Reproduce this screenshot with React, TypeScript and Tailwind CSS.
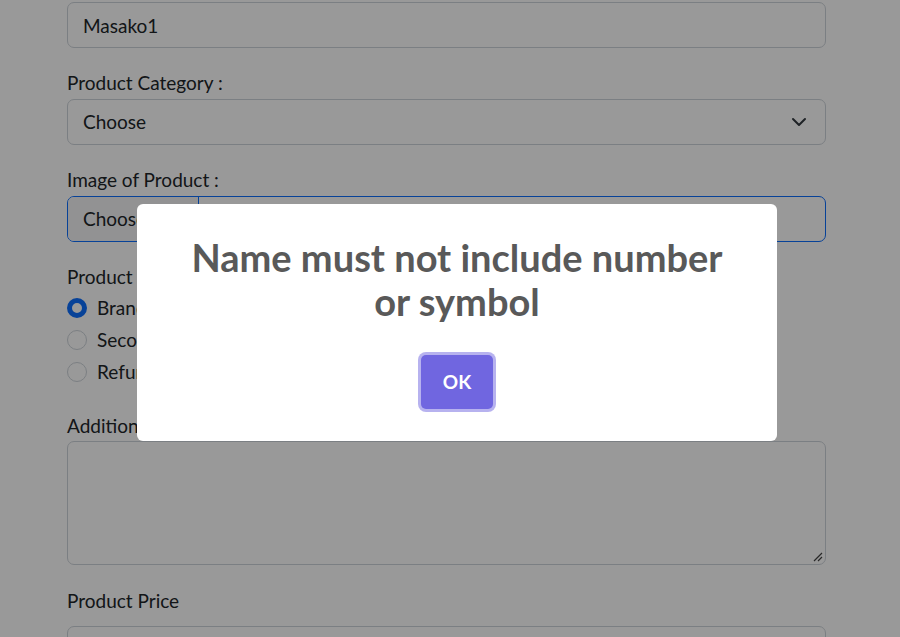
import React from "react";

const font = { fontFamily: "Lato, 'Noto Sans', sans-serif" };

const conditions = ["Brand New", "Second Hand", "Refurbished"];

const App = () => {
  return (
    <div className="relative h-[637px] w-[900px] overflow-hidden bg-white" style={font}>
      {/* form under the alert */}
      <form className="ml-[67px] flex w-[759px] flex-col pt-[2px] text-[19px] text-[#212529]">
        <input
          className="h-[46px] rounded-[7px] border border-[#ced4da] px-[15px] text-[19px] outline-none"
          defaultValue="Masako1"
        />

        <label className="mt-[21px] mb-[3px] leading-[27px]">Product Category :</label>
        <div className="flex h-[46px] items-center justify-between rounded-[7px] border border-[#ced4da] px-[15px]">
          <span>Choose</span>
          <svg width="16" height="16" viewBox="0 0 16 16" fill="none" stroke="#343a40" strokeWidth="2" strokeLinecap="round" strokeLinejoin="round" className="mr-[3px]">
            <path d="M2 5l6 6 6-6" />
          </svg>
        </div>

        <label className="mt-[21px] mb-[3px] leading-[27px]">Image of Product :</label>
        <div className="flex h-[46px] overflow-hidden rounded-[7px] border border-[#0d6efd]">
          <div className="flex w-[131px] items-center border-r border-[#0d6efd] bg-[#f3f4f5] px-[15px]">
            Choose File
          </div>
          <div className="flex items-center px-[12px]">No file chosen</div>
        </div>

        <label className="mt-[21px] mb-[6px] leading-[27px]">Product Condition :</label>
        <div className="flex flex-col gap-[8px]">
          {conditions.map((c, i) => (
            <div key={c} className="flex h-[24px] items-center gap-[10px]">
              {i === 0 ? (
                <span className="h-[20px] w-[20px] rounded-full border-[5px] border-[#0d6efd] bg-white" />
              ) : (
                <span className="h-[20px] w-[20px] rounded-full border border-[#ced4da] bg-white" />
              )}
              <span>{c}</span>
            </div>
          ))}
        </div>

        <label className="mt-[28px] mb-[2px] leading-[27px]">Additional Information :</label>
        <div className="relative h-[124px] rounded-[7px] border border-[#ced4da]">
          <svg width="10" height="10" viewBox="0 0 10 10" className="absolute right-[2px] bottom-[2px]" stroke="#444" strokeWidth="1.2">
            <path d="M1 9L9 1M5 9L9 5" />
          </svg>
        </div>

        <label className="mt-[22px] mb-[12px] leading-[27px]">Product Price</label>
        <input className="h-[46px] rounded-[7px] border border-[#ced4da] px-[15px] outline-none" />
      </form>

      {/* overlay */}
      <div className="absolute inset-0 flex items-start bg-black/40">
        <div className="mt-[204px] ml-[137px] flex h-[237px] w-[640px] flex-col items-center rounded-[6px] bg-white">
          <h2 className="mt-[31px] px-[20px] text-center text-[38px] leading-[44px] font-bold text-[#595959]">
            Name must not include number
            <br />
            or symbol
          </h2>
          <button
            type="button"
            className="mt-[32px] flex h-[54px] w-[72px] items-center justify-center rounded-[5px] bg-[#7066e0] text-[19px] font-bold text-white shadow-[0_0_0_3px_rgba(112,102,224,0.5)]"
          >
            OK
          </button>
        </div>
      </div>
    </div>
  );
};

export default App;
